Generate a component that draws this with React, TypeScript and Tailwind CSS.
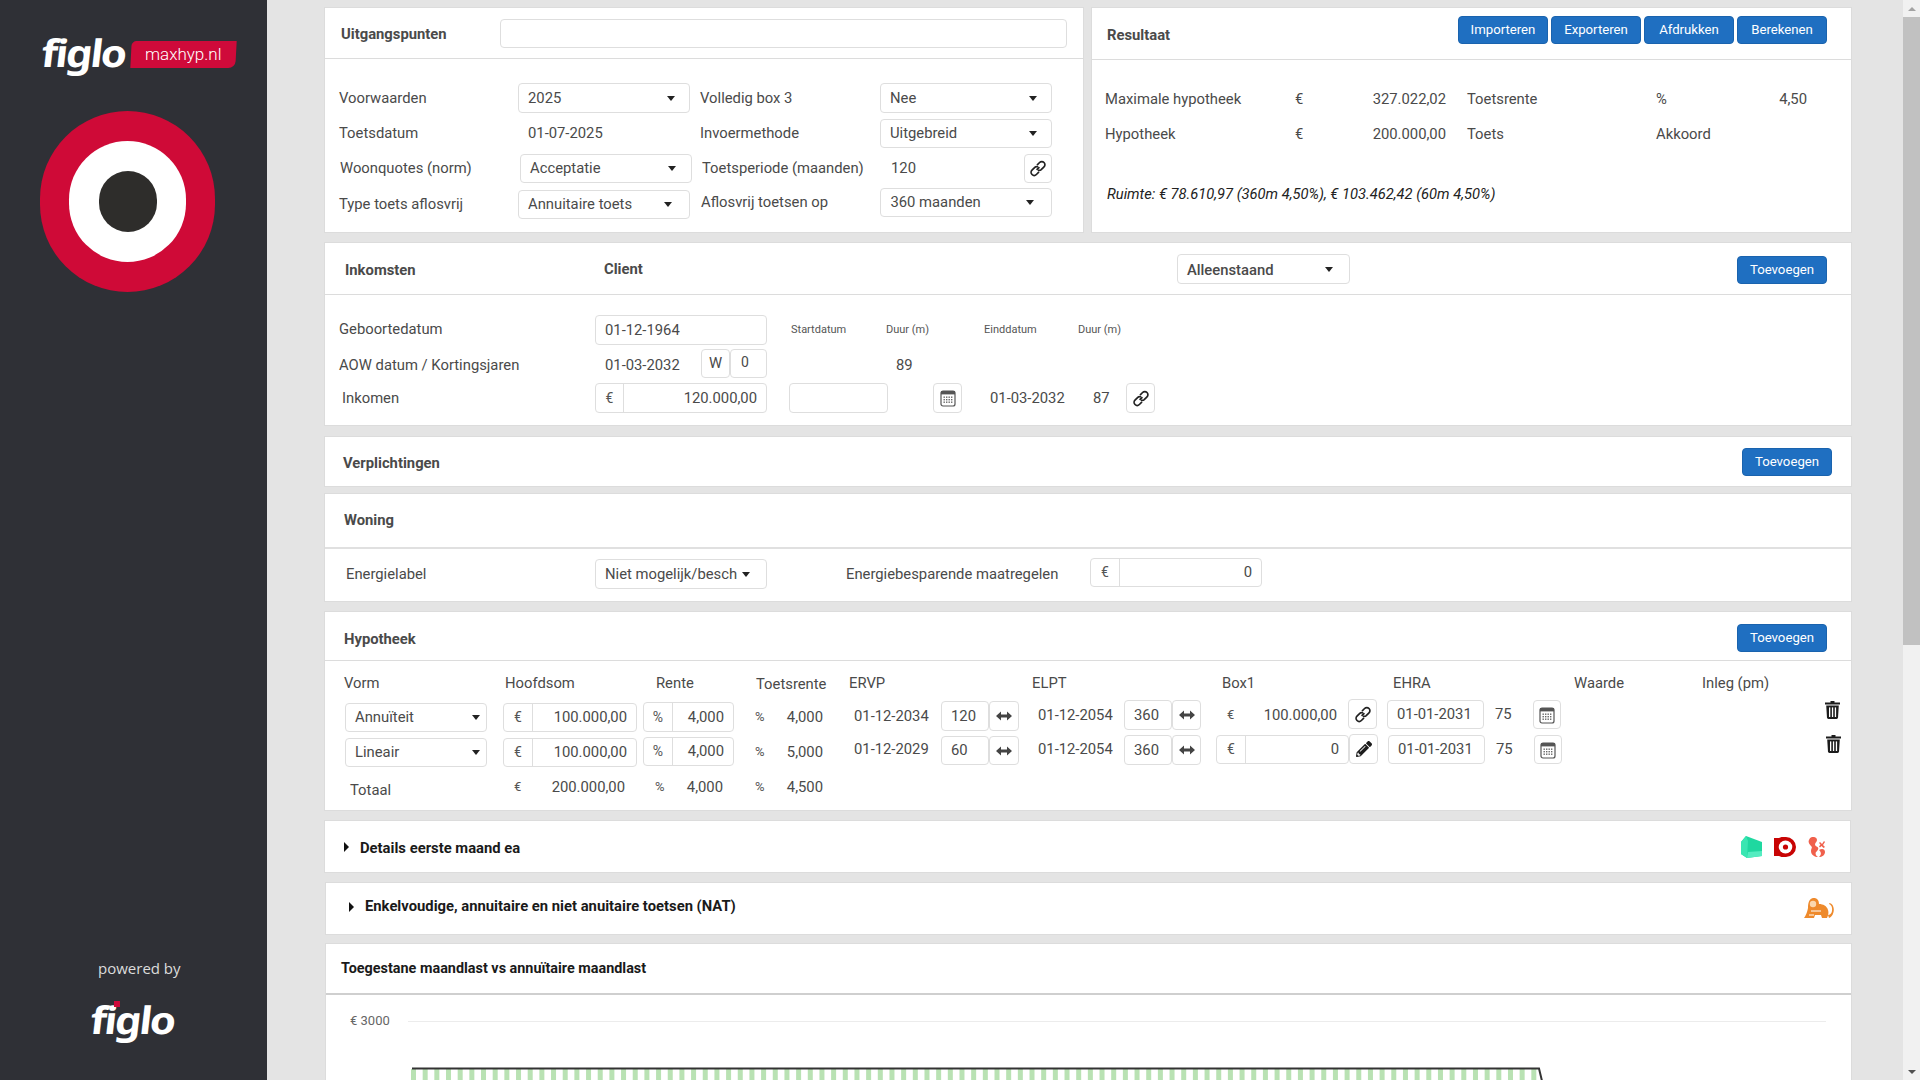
import React from "react";
import { FaPencilAlt } from "react-icons/fa";

const cell = "bg-white border border-[#dedede] rounded-[4px]";

const Caret = () => <span className="block w-0 h-0 border-x-[4px] border-x-transparent border-t-[5px] border-t-[#222] shrink-0" />;

const Sel = ({ className, children }: { className: string; children: React.ReactNode }) => (
    <div className={`${cell} flex items-center justify-between pl-[9px] ${className}`}>
        <span>{children}</span>
        <Caret />
    </div>
);

const Input = ({ className, children }: { className: string; children?: React.ReactNode }) => (
    <div className={`${cell} flex items-center px-[9px] ${className}`}>{children}</div>
);

const Group = ({ className, sign, addon, children }: { className: string; sign: string; addon: string; children: React.ReactNode }) => (
    <div className={`${cell} flex items-center ${className}`}>
        <span className={`${addon} h-full flex items-center justify-center border-r border-[#dedede] text-[14px] text-[#555]`}>{sign}</span>
        <span className="flex-1 text-right pr-[9px]">{children}</span>
    </div>
);

const IconBtn = ({ className, children }: { className: string; children: React.ReactNode }) => (
    <div className={`${cell} flex items-center justify-center shrink-0 ${className}`}>{children}</div>
);

const Btn = ({ className, children }: { className?: string; children: React.ReactNode }) => (
    <div className={`bg-[#1f6fc1] border border-[#1a63ae] rounded-[4px] text-white text-[13.2px] h-[28px] w-[90px] flex items-center justify-center ${className ?? ""}`}>{children}</div>
);

const LinkIcon = () => (
    <svg width="16" height="17" viewBox="0 0 16 16" fill="none" stroke="#222" strokeWidth="1.7">
        <path d="M6.6 9.4 L9.4 6.6" />
        <path d="M7 4.6 L9.6 2 a2.6 2.6 0 0 1 4.4 4.4 L11.2 9.2 a2.6 2.6 0 0 1 -3.2 .3" />
        <path d="M9 11.4 L6.4 14 a2.6 2.6 0 0 1 -4.4 -4.4 L4.8 6.8 a2.6 2.6 0 0 1 3.2 -.3" />
    </svg>
);

const CalIcon = () => (
    <svg width="16" height="18" viewBox="0 0 16 18">
        <rect x="1" y="2" width="14" height="15" rx="2" fill="none" stroke="#555" strokeWidth="1.2" />
        <rect x="1" y="2" width="14" height="3.4" fill="#555" />
        {[3.5, 6, 8.5, 11].map((x) => [7.5, 10, 12.5].map((y) => <rect key={`${x}-${y}`} x={x} y={y} width="1.4" height="1.4" fill="#666" />))}
    </svg>
);

const ArrowsIcon = () => (
    <svg width="16" height="10" viewBox="0 0 16 10" fill="#444">
        <path d="M0 5 L5 0.5 V3.5 H11 V0.5 L16 5 L11 9.5 V6.5 H5 V9.5 Z" />
    </svg>
);

const TrashIcon = () => (
    <svg width="15" height="18" viewBox="0 0 15 18" fill="#1c1c1c" className="shrink-0">
        <path d="M5.5 0 H9.5 V1.4 H15 V3.6 H0 V1.4 H5.5 Z" />
        <path d="M1.2 4.6 H13.8 L13 16.6 Q12.9 18 11.6 18 H3.4 Q2.1 18 2 16.6 Z" />
        <rect x="4" y="6.4" width="1.3" height="9.6" fill="#fff" />
        <rect x="6.9" y="6.4" width="1.3" height="9.6" fill="#fff" />
        <rect x="9.8" y="6.4" width="1.3" height="9.6" fill="#fff" />
    </svg>
);

const Triangle = ({ className }: { className?: string }) => <span className={`w-0 h-0 border-y-[5px] border-y-transparent border-l-[5px] border-l-[#111] shrink-0 ${className ?? ""}`} />;

const Figlo = ({ className }: { className: string }) => (
    <span className={`inline-block font-['Noto_Sans',sans-serif] font-bold text-white leading-none tracking-[-0.05em] -skew-x-6 scale-y-90 origin-top ${className}`}>figlo</span>
);

const Panel = ({ className, children }: { className: string; children: React.ReactNode }) => (
    <section className={`bg-white border border-[#dcdcdc] ${className}`}>{children}</section>
);

function Sidebar() {
    return (
        <aside className="w-[267px] h-full shrink-0 bg-[#2f3036] flex flex-col items-start">
            <div className="flex items-start pl-[44px] pt-[34px] h-[111px]">
                <Figlo className="text-[42px]" />
                <div className="ml-[3px] mt-[7px] w-[105px] h-[27px] bg-[#cf0a3a] rounded-tl-[5px] rounded-br-[7px] -skew-x-3 flex items-center justify-center">
                    <span className="skew-x-3 text-white text-[17px] font-light">maxhyp.nl</span>
                </div>
            </div>
            <div className="ml-[40px] w-[175px] h-[181px] rounded-full bg-[#cf0a37] flex items-center justify-center">
                <div className="w-[117px] h-[121px] rounded-full bg-white flex items-center justify-center">
                    <div className="w-[58px] h-[61px] rounded-full bg-[#2e2d2b]" />
                </div>
            </div>
            <div className="mt-auto w-full flex flex-col pb-[34px]">
                <div className="pl-[98px] font-['Open_Sans',sans-serif] text-[15px] text-[#dcdcdc] leading-[20px]">powered by</div>
                <div className="relative pl-[93px] mt-[23px] h-[45px] flex items-start">
                    <Figlo className="text-[42px]" />
                    <span className="absolute left-[114px] top-[0px] w-[6px] h-[6px] bg-[#cf0a3a]" />
                </div>
            </div>
        </aside>
    );
}

function TopPanels() {
    return (
        <div className="flex mt-[7px] gap-[7px]">
            <Panel className="w-[760px] h-[226px]">
                <div className="h-[51px] border-b border-[#dcdcdc] flex items-center pl-[16px] pr-[16px]">
                    <h2 className="w-[159px] font-bold mt-[3px]">Uitgangspunten</h2>
                    <div className={`${cell} flex-1 h-[29px]`} />
                </div>
                <div className="flex">
                    <div className="w-[375px] pl-[14px] pt-[24px] flex flex-col">
                        <div className="flex items-center h-[30px]"><span className="w-[179px]">Voorwaarden</span><Sel className="w-[172px] h-[30px] pr-[14px]">2025</Sel></div>
                        <div className="flex items-center h-[29px] mt-[5px]"><span className="w-[179px] mt-[1px]">Toetsdatum</span><span className="pl-[10px] mt-[1px]">01-07-2025</span></div>
                        <div className="flex items-center h-[29px] mt-[7px] ml-[1px]"><span className="w-[179px]">Woonquotes (norm)</span><Sel className="ml-[1px] w-[172px] h-[29px] pr-[15px]">Acceptatie</Sel></div>
                        <div className="flex items-center h-[29px] mt-[7px]"><span className="w-[179px]">Type toets aflosvrij</span><Sel className="w-[172px] h-[29px] pr-[17px]">Annuitaire toets</Sel></div>
                    </div>
                    <div className="w-[352px] pt-[24px] flex flex-col">
                        <div className="flex items-center h-[30px]"><span className="w-[180px]">Volledig box 3</span><Sel className="w-[172px] h-[30px] pr-[14px]">Nee</Sel></div>
                        <div className="flex items-center h-[29px] mt-[6px]"><span className="w-[180px]">Invoermethode</span><Sel className="w-[172px] h-[29px] pr-[14px]">Uitgebreid</Sel></div>
                        <div className="flex items-center h-[29px] mt-[6px] ml-[2px]"><span className="w-[189px]">Toetsperiode (maanden)</span><span className="w-[133px]">120</span><IconBtn className="w-[28px] h-[29px]"><LinkIcon /></IconBtn></div>
                        <div className="flex items-center h-[29px] mt-[5px] ml-[1px]"><span className="w-[180px]">Aflosvrij toetsen op</span><Sel className="w-[172px] h-[29px] pr-[17px]">360 maanden</Sel></div>
                    </div>
                </div>
            </Panel>
            <Panel className="w-[761px] h-[226px]">
                <div className="h-[52px] border-b border-[#dcdcdc] flex items-center pl-[15px] pr-[24px]">
                    <h2 className="font-bold mt-[4px]">Resultaat</h2>
                    <div className="ml-auto flex gap-[3px] -mt-[8px]">
                        <Btn>Importeren</Btn>
                        <Btn>Exporteren</Btn>
                        <Btn>Afdrukken</Btn>
                        <Btn>Berekenen</Btn>
                    </div>
                </div>
                <div className="pl-[13px] pt-[22px]">
                    <div className="grid grid-cols-[190px_20px_131px_21px_189px_20px_131px] auto-rows-[35px] items-center">
                        <span>Maximale hypotheek</span><span>€</span><span className="text-right">327.022,02</span><span /><span>Toetsrente</span><span>%</span><span className="text-right">4,50</span>
                        <span>Hypotheek</span><span>€</span><span className="text-right">200.000,00</span><span /><span>Toets</span><span>Akkoord</span><span />
                    </div>
                    <p className="mt-[31px] ml-[2px] italic text-[#222] text-[14.7px]">Ruimte: € 78.610,97 (360m 4,50%), € 103.462,42 (60m 4,50%)</p>
                </div>
            </Panel>
        </div>
    );
}

function Inkomsten() {
    return (
        <Panel className="mt-[9px] h-[184px]">
            <div className="h-[52px] border-b border-[#dcdcdc] flex items-center">
                <h2 className="w-[279px] pl-[20px] font-bold mt-[3px]">Inkomsten</h2>
                <span className="w-[573px] font-bold mt-[1px]">Client</span>
                <Sel className="w-[173px] h-[30px] font-medium mt-[1px] pr-[16px]"><span className="relative top-[1px]">Alleenstaand</span></Sel>
                <Btn className="ml-auto mr-[24px] mt-[3px]">Toevoegen</Btn>
            </div>
            <div className="pt-[20px]">
                <div className="flex items-center h-[30px]">
                    <span className="w-[270px] pl-[14px] -mt-[1px]">Geboortedatum</span>
                    <Input className="w-[172px] h-[30px]">01-12-1964</Input>
                    <span className="ml-[24px] w-[95px] text-[11px] text-[#555]">Startdatum</span>
                    <span className="w-[98px] text-[11px] text-[#555]">Duur (m)</span>
                    <span className="w-[94px] text-[11px] text-[#555]">Einddatum</span>
                    <span className="text-[11px] text-[#555]">Duur (m)</span>
                </div>
                <div className="flex items-center h-[29px] mt-[4px]">
                    <span className="w-[270px] pl-[14px] mt-[4px]">AOW datum / Kortingsjaren</span>
                    <span className="w-[106px] pl-[10px] mt-[4px]">01-03-2032</span>
                    <div className={`${cell} w-[29px] h-[29px] flex items-center justify-center`}>W</div>
                    <div className={`${cell} w-[37px] h-[29px] flex items-center pl-[10px] text-[14px] pb-[3px]`}>0</div>
                    <span className="ml-[129px] mt-[4px]">89</span>
                </div>
                <div className="flex items-center h-[30px] mt-[5px]">
                    <span className="w-[270px] pl-[17px]">Inkomen</span>
                    <Group className="w-[172px] h-[30px]" sign="€" addon="w-[28px]">120.000,00</Group>
                    <Input className="ml-[22px] w-[99px] h-[30px]" />
                    <IconBtn className="ml-[45px] w-[29px] h-[30px]"><CalIcon /></IconBtn>
                    <span className="ml-[28px] w-[103px]">01-03-2032</span>
                    <span className="w-[33px]">87</span>
                    <IconBtn className="w-[29px] h-[30px]"><LinkIcon /></IconBtn>
                </div>
            </div>
        </Panel>
    );
}

function Woning() {
    return (
        <Panel className="mt-[6px] h-[109px]">
            <div className="h-[55px] border-b-2 border-[#e0e0e0] flex items-center pl-[19px]">
                <h2 className="font-bold">Woning</h2>
            </div>
            <div className="flex items-center pt-[10px]">
                <span className="w-[270px] pl-[21px] mt-[1px]">Energielabel</span>
                <div className={`${cell} w-[172px] h-[30px] flex items-center pl-[9px]`}>
                    <span>Niet mogelijk/besch</span>
                    <span className="ml-[5px] flex"><Caret /></span>
                </div>
                <span className="ml-[79px] w-[244px] mt-[1px]">Energiebesparende maatregelen</span>
                <div className="-mt-[3px] w-[172px]"><Group className="w-[172px] h-[29px]" sign="€" addon="w-[29px]">0</Group></div>
            </div>
        </Panel>
    );
}

function Hypotheek() {
    return (
        <Panel className="mt-[9px] h-[200px]">
            <div className="h-[49px] border-b border-[#dcdcdc] flex items-center pl-[19px]">
                <h2 className="font-bold mt-[6px]">Hypotheek</h2>
                <Btn className="ml-auto mr-[24px] mt-[3px]">Toevoegen</Btn>
            </div>
            <div className="flex pl-[19px] pt-[12px] h-[32px] items-center">
                <span className="w-[161px]">Vorm</span>
                <span className="w-[151px]">Hoofdsom</span>
                <span className="w-[100px]">Rente</span>
                <span className="w-[93px] mt-[2px]">Toetsrente</span>
                <span className="w-[183px]">ERVP</span>
                <span className="w-[190px]">ELPT</span>
                <span className="w-[171px]">Box1</span>
                <span className="w-[181px]">EHRA</span>
                <span className="w-[128px]">Waarde</span>
                <span>Inleg (pm)</span>
            </div>
            <div className="flex items-start h-[35px] mt-[7px] pl-[20px]">
                <Sel className="w-[142px] h-[29px] mt-[3px] pr-[6px]">Annuïteit</Sel>
                <Group className="ml-[16px] w-[134px] h-[29px] mt-[3px]" sign="€" addon="w-[29px]">100.000,00</Group>
                <Group className="ml-[6px] w-[91px] h-[30px] mt-[2px]" sign="%" addon="w-[29px]">4,000</Group>
                <span className="ml-[21px] w-[20px] h-[30px] mt-[2px] flex items-center text-[13px] text-[#555]">%</span>
                <span className="w-[48px] h-[30px] mt-[2px] flex items-center justify-end">4,000</span>
                <span className="ml-[31px] w-[87px] h-[30px] mt-[1px] flex items-center">01-12-2034</span>
                <Input className="w-[48px] h-[30px] mt-[1px]">120</Input>
                <IconBtn className="w-[30px] h-[30px] mt-[1px]"><ArrowsIcon /></IconBtn>
                <span className="ml-[19px] w-[86px] h-[30px] flex items-center">01-12-2054</span>
                <Input className="w-[48px] h-[30px]">360</Input>
                <IconBtn className="w-[29px] h-[30px]"><ArrowsIcon /></IconBtn>
                <span className="ml-[26px] w-[20px] h-[30px] flex items-center text-[13px] text-[#555]">€</span>
                <span className="w-[90px] h-[30px] flex items-center justify-end">100.000,00</span>
                <IconBtn className="ml-[11px] w-[29px] h-[30px] -mt-[1px]"><LinkIcon /></IconBtn>
                <Input className="ml-[10px] w-[97px] h-[29px]">01-01-2031</Input>
                <span className="ml-[11px] w-[38px] h-[29px] flex items-center">75</span>
                <IconBtn className="w-[28px] h-[29px]"><CalIcon /></IconBtn>
                <span className="ml-[264px] mt-[1px]"><TrashIcon /></span>
            </div>
            <div className="flex items-start h-[35px] pl-[20px]">
                <Sel className="w-[142px] h-[29px] mt-[3px] pr-[6px]">Lineair</Sel>
                <Group className="ml-[16px] w-[134px] h-[29px] mt-[3px]" sign="€" addon="w-[29px]">100.000,00</Group>
                <Group className="ml-[6px] w-[91px] h-[29px] mt-[2px]" sign="%" addon="w-[29px]">4,000</Group>
                <span className="ml-[21px] w-[20px] h-[30px] mt-[2px] flex items-center text-[13px] text-[#555]">%</span>
                <span className="w-[48px] h-[30px] mt-[2px] flex items-center justify-end">5,000</span>
                <span className="ml-[31px] w-[87px] h-[29px] flex items-center">01-12-2029</span>
                <Input className="w-[48px] h-[29px] mt-[1px]">60</Input>
                <IconBtn className="w-[30px] h-[29px] mt-[1px]"><ArrowsIcon /></IconBtn>
                <span className="ml-[19px] w-[86px] h-[28px] flex items-center">01-12-2054</span>
                <Input className="w-[48px] h-[30px]">360</Input>
                <IconBtn className="w-[29px] h-[30px]"><ArrowsIcon /></IconBtn>
                <Group className="ml-[15px] w-[133px] h-[29px]" sign="€" addon="w-[29px]">0</Group>
                <IconBtn className="w-[29px] h-[30px] -mt-[1px]"><FaPencilAlt className="text-[#1c1c1c] text-[16px]" /></IconBtn>
                <Input className="ml-[10px] w-[97px] h-[29px]">01-01-2031</Input>
                <span className="ml-[11px] w-[38px] h-[29px] flex items-center">75</span>
                <IconBtn className="w-[28px] h-[29px]"><CalIcon /></IconBtn>
                <span className="ml-[264px]"><TrashIcon /></span>
            </div>
            <div className="flex items-start h-[37px] mt-[2px] pl-[25px]">
                <span className="w-[164px] h-[37px] flex items-center">Totaal</span>
                <span className="w-[20px] h-[30px] flex items-center text-[13px] text-[#555]">€</span>
                <span className="w-[91px] h-[30px] flex items-center justify-end">200.000,00</span>
                <span className="ml-[30px] w-[20px] h-[30px] flex items-center text-[13px] text-[#555]">%</span>
                <span className="w-[48px] h-[30px] flex items-center justify-end">4,000</span>
                <span className="ml-[32px] w-[20px] h-[30px] flex items-center text-[13px] text-[#555]">%</span>
                <span className="w-[48px] h-[30px] flex items-center justify-end">4,500</span>
            </div>
        </Panel>
    );
}

const GreenBox = () => (
    <svg width="21" height="22" viewBox="0 0 21 22">
        <path d="M5 0 L21 6 V20 L6 22 L0 18 V6 Z" fill="#1fd8a0" />
        <path d="M5 0 L7 5 L6 22 L0 18 V6 Z" fill="#39e6b2" />
        <path d="M7 16 L21 15 V20 L6 22 Z" fill="#54ecc0" />
    </svg>
);

const RedRing = () => (
    <svg width="22" height="20" viewBox="0 0 22 20">
        <path d="M0 1 H5 A10 10 0 0 1 12 0 A10 10 0 0 1 12 20 A10 10 0 0 1 5 19 H0 Z" fill="#c80404" />
        <ellipse cx="11.5" cy="10" rx="6.8" ry="6.4" fill="#fff" />
        <circle cx="11.5" cy="10" r="2.6" fill="#c80404" />
    </svg>
);

const Squirrel = () => (
    <svg width="18" height="20" viewBox="0 0 18 20" fill="#f0604c">
        <path d="M4 0 C7 -0.5 9 1 9 3 C9 5 7 5.5 7 7.5 C7 9 9 9.5 10 10.5 C11 12 9 14 8 15 C7 17 8 19 10 20 C7 20 3 18 3 14 C3 11 5 11 3 9 C1 7 0 5 1 3 C1.5 1.5 2.5 0.3 4 0 Z" />
        <path d="M11 13 C14 11 17 12 17 15 C17 18 14 20 11 20 C13 18 14 16 11 13 Z" />
        <path d="M12 5 L14 7 L16 4 L17 5 L15 8 L17 10 L15.5 11 L13.5 9 L12 10.5 L11 9.5 L12.5 7.5 L11 6 Z" />
    </svg>
);

const Lion = () => (
    <svg width="31" height="21" viewBox="0 0 31 21" fill="#ee8a2c">
        <path d="M1 20 C3 17 4 15 5 10 C5 5 6 1 10 0 C14 -0.5 16 2 16 6 C20 6 24 8 25 12 C26 15 25 18 24 20 H19 L18 17 H12 L11 20 Z" />
        <path d="M25 17 C28 17 29.5 14 29 10 C28.8 8 27.5 6.5 26 6 L26.6 5 C29 5.6 30.6 8 30.8 11 C31 15 29 19 26 20 Z" />
        <circle cx="10" cy="6" r="3.2" fill="#fbd7ad" />
        <path d="M8 13 H18 M6 17 H11" stroke="#fff" strokeWidth="1" />
    </svg>
);

function Chart() {
    const bars = Array.from({ length: 97 }, (_, i) => i * 11.67);
    return (
        <div className="pt-[16px]">
            <div className="flex items-center h-[20px]">
                <span className="w-[82px] pl-[24px] text-[13px] text-[#666] whitespace-nowrap shrink-0">€ 3000</span>
                <span className="flex-1 h-px bg-[#ececec] mr-[25px]" />
            </div>
            <svg width="1136" height="60" className="ml-[85px] mt-[36px] block">
                {bars.map((x) => (
                    <rect key={x} x={x} y="2" width="5" height="58" fill="#b9e2b3" />
                ))}
                <path d="M1 1.5 H1128 L1131 14" fill="none" stroke="#333" strokeWidth="2" />
            </svg>
        </div>
    );
}

function Scrollbar() {
    return (
        <div className="w-[17px] h-full shrink-0 bg-[#f1f1f1] flex flex-col items-center">
            <div className="h-[17px] flex items-center justify-center">
                <span className="w-0 h-0 border-x-[4px] border-x-transparent border-b-[4px] border-b-[#a3a3a3]" />
            </div>
            <div className="w-full h-[628px] bg-[#c1c1c1]" />
            <div className="mt-auto h-[17px] flex items-center justify-center">
                <span className="w-0 h-0 border-x-[4px] border-x-transparent border-t-[4px] border-t-[#505050]" />
            </div>
        </div>
    );
}

export default function App() {
    return (
        <div className="flex h-screen w-screen overflow-hidden bg-[#e4e4e4] font-['Roboto',sans-serif] text-[14.8px] text-[#4a4a4a]">
            <Sidebar />
            <main className="flex-1 min-w-0 h-full overflow-hidden pl-[57px] pr-[51px]">
                <TopPanels />
                <Inkomsten />
                <Panel className="mt-[10px] h-[51px] flex items-center pl-[18px]">
                    <h2 className="font-bold mt-[3px]">Verplichtingen</h2>
                    <Btn className="ml-auto mr-[19px]">Toevoegen</Btn>
                </Panel>
                <Woning />
                <Hypotheek />
                <Panel className="mt-[9px] mr-[1px] h-[53px] flex items-center pl-[19px] pr-[24px] text-[#1a1a1a] font-bold">
                    <Triangle />
                    <span className="ml-[11px] mt-[3px]">Details eerste maand ea</span>
                    <div className="ml-auto flex items-center gap-[12px]">
                        <GreenBox />
                        <RedRing />
                        <Squirrel />
                    </div>
                </Panel>
                <Panel className="mt-[9px] ml-[1px] h-[53px] flex items-center pl-[23px] pr-[17px] text-[#1a1a1a] font-bold">
                    <Triangle className="-mt-[3px]" />
                    <span className="ml-[11px] -mt-[4px]">Enkelvoudige, annuitaire en niet anuitaire toetsen (NAT)</span>
                    <div className="ml-auto -mt-[1px]"><Lion /></div>
                </Panel>
                <Panel className="mt-[8px] ml-[1px] h-[300px]">
                    <div className="h-[51px] border-b-2 border-[#cfcfcf] flex items-center pl-[15px] text-[#1a1a1a] text-[14.4px] font-bold">
                        Toegestane maandlast vs annuïtaire maandlast
                    </div>
                    <Chart />
                </Panel>
            </main>
            <Scrollbar />
        </div>
    );
}
